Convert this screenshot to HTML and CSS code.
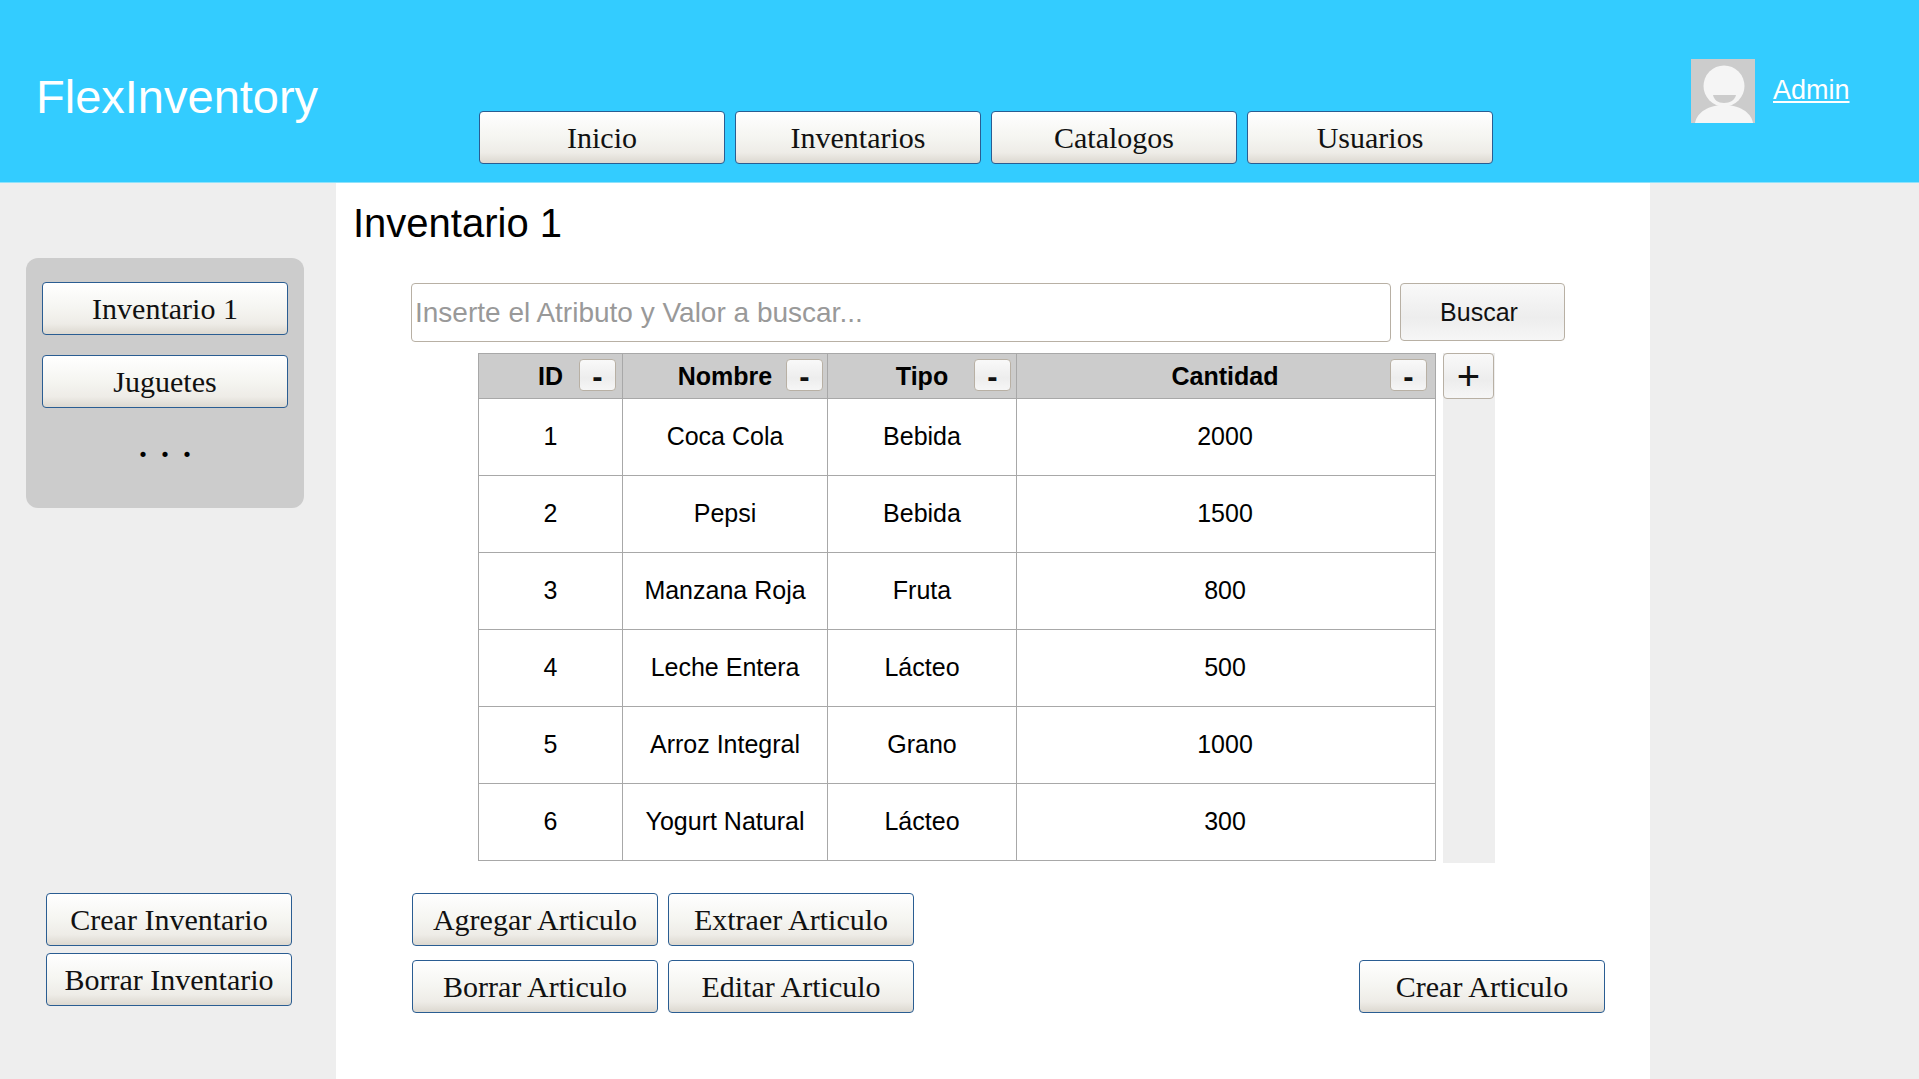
FILE: index.html
```html
<!DOCTYPE html>
<html lang="es">
<head>
  <meta charset="UTF-8">
  <title>FlexInventory</title>
  <link rel="stylesheet" href="styles.css">
</head>
<body>

  <header class="topbar">
    <div class="logo">FlexInventory</div>
    <nav class="nav">
      <button class="btn">Inicio</button>
      <button class="btn">Inventarios</button>
      <button class="btn">Catalogos</button>
      <button class="btn">Usuarios</button>
    </nav>
    <div class="user">
      <svg class="avatar" viewBox="0 0 64 64" width="64" height="64">
        <rect width="64" height="64" fill="#cccccc"/>
        <path d="M4 64C6 53 18 46 33 46S60 53 62 64Z" fill="#f5f5f5"/>
        <circle cx="33" cy="27" r="20.5" fill="#f5f5f5"/>
        <path d="M22 36H45C44 41 39 44 33 44S23 41 22 36Z" fill="#cccccc"/>
      </svg>
      <a class="user-link" href="#">Admin</a>
    </div>
  </header>

  <div class="layout">

    <aside class="sidebar">
      <div class="inv-list">
        <button class="btn">Inventario 1</button>
        <button class="btn">Juguetes</button>
        <div class="dots">. . .</div>
      </div>
      <div class="inv-actions">
        <button class="btn">Crear Inventario</button>
        <button class="btn">Borrar Inventario</button>
      </div>
    </aside>

    <main class="content">
      <h2 class="title">Inventario 1</h2>

      <div class="search">
        <input class="search-input" type="text" placeholder="Inserte el Atributo y Valor a buscar...">
        <button class="btn-light search-btn">Buscar</button>
      </div>

      <div class="table-row">
        <table class="items">
          <colgroup>
            <col class="col-id">
            <col class="col-nombre">
            <col class="col-tipo">
            <col class="col-cantidad">
          </colgroup>
          <thead>
            <tr>
              <th>ID<button class="btn-light btn-min">-</button></th>
              <th>Nombre<button class="btn-light btn-min">-</button></th>
              <th>Tipo<button class="btn-light btn-min">-</button></th>
              <th>Cantidad<button class="btn-light btn-min">-</button></th>
            </tr>
          </thead>
          <tbody>
            <tr><td>1</td><td>Coca Cola</td><td>Bebida</td><td>2000</td></tr>
            <tr><td>2</td><td>Pepsi</td><td>Bebida</td><td>1500</td></tr>
            <tr><td>3</td><td>Manzana Roja</td><td>Fruta</td><td>800</td></tr>
            <tr><td>4</td><td>Leche Entera</td><td>Lácteo</td><td>500</td></tr>
            <tr><td>5</td><td>Arroz Integral</td><td>Grano</td><td>1000</td></tr>
            <tr><td>6</td><td>Yogurt Natural</td><td>Lácteo</td><td>300</td></tr>
          </tbody>
        </table>
        <div class="add-col">
          <button class="btn-light btn-add">+</button>
        </div>
      </div>

      <div class="actions">
        <div class="actions-grid">
          <button class="btn">Agregar Articulo</button>
          <button class="btn">Extraer Articulo</button>
          <button class="btn">Borrar Articulo</button>
          <button class="btn">Editar Articulo</button>
        </div>
        <button class="btn">Crear Articulo</button>
      </div>
    </main>

    <div class="rightbar"></div>

  </div>

</body>
</html>
```

FILE: styles.css
```css
html, body {
  height: 100%;
}
body {
  margin: 0;
  overflow: hidden;
  background: #eeeeee;
  font-family: "Liberation Sans", Arial, sans-serif;
  color: #000;
}

/* botones */
.btn {
  width: 246px;
  height: 53px;
  padding: 1px 0 0;
  border: 1px solid #2a5d92;
  border-radius: 4px;
  background: linear-gradient(#ffffff 0%, #f5f5f1 50%, #eeece7 80%, #dcd8d0 100%);
  font-family: "Liberation Serif", "Times New Roman", serif;
  font-size: 30px;
  color: #111;
}
.btn-light {
  padding: 0;
  border: 1px solid #b8b0a4;
  border-radius: 4px;
  background: linear-gradient(#f9f9f9 0%, #ededed 60%, #f6f6f6 100%);
  font-family: "Liberation Sans", Arial, sans-serif;
  color: #111;
}

/* cabecera */
.topbar {
  display: flex;
  height: 182px;
  background: #33ccff;
  border-bottom: 1px solid #8fe2fb;
}
.logo {
  width: 443px;
  padding: 69px 0 0 36px;
  font-size: 47px;
  line-height: 56px;
  color: #fff;
}
.nav {
  display: flex;
  gap: 10px;
  padding-top: 111px;
}
.user {
  display: flex;
  align-items: flex-start;
  gap: 18px;
  margin-left: 198px;
  padding-top: 59px;
}
.user-link {
  margin-top: 14px;
  font-size: 27px;
  line-height: 34px;
  color: #fff;
}

/* cuerpo */
.layout {
  display: grid;
  grid-template-columns: 336px 1314px 1fr;
  height: 896px;
}

.sidebar {
  display: flex;
  flex-direction: column;
  padding: 75px 32px 0 26px;
}
.inv-list {
  display: flex;
  flex-direction: column;
  align-items: center;
  gap: 20px;
  width: 278px;
  height: 250px;
  padding-top: 24px;
  box-sizing: border-box;
  background: #cccccc;
  border-radius: 12px;
}
.dots {
  padding-left: 3px;
  font-family: "Liberation Serif", "Times New Roman", serif;
  font-size: 32px;
  font-weight: bold;
  letter-spacing: 3px;
  line-height: 36px;
}
.inv-actions {
  display: flex;
  flex-direction: column;
  gap: 7px;
  margin-top: 385px;
  margin-left: 20px;
}

/* contenido */
.content {
  background: #fff;
  padding: 0 45px 0 17px;
}
.title {
  margin: 16px 0 0;
  font-size: 40px;
  font-weight: normal;
  line-height: 48px;
}
.search {
  display: flex;
  gap: 9px;
  margin: 36px 0 0 58px;
}
.search-input {
  width: 980px;
  height: 59px;
  padding: 1px 3px 0;
  box-sizing: border-box;
  border: 1px solid #b8b0a4;
  border-radius: 4px;
  font-family: "Liberation Sans", Arial, sans-serif;
  font-size: 28px;
}
.search-input::placeholder {
  color: #999;
  opacity: 1;
}
.search-btn {
  width: 165px;
  height: 58px;
  padding-right: 7px;
  font-size: 25px;
}

.table-row {
  display: flex;
  gap: 7px;
  margin: 11px 0 0 125px;
}
.items {
  width: 958px;
  table-layout: fixed;
  border-collapse: collapse;
  align-self: flex-start;
  font-size: 25px;
}
.col-id { width: 144px; }
.col-nombre { width: 205px; }
.col-tipo { width: 189px; }
.items th,
.items td {
  padding: 0;
  border: 1px solid #a8a8a8;
  text-align: center;
  box-sizing: border-box;
}
.items th {
  position: relative;
  height: 45px;
  background: #cccccc;
  font-size: 25px;
}
.items td {
  height: 77px;
  padding-bottom: 2px;
}
.items th:last-child,
.items td:last-child {
  padding-right: 2px;
}
.btn-min {
  position: absolute;
  top: 5px;
  right: 6px;
  width: 37px;
  height: 32px;
  padding-top: 3px;
  font-size: 31px;
  font-weight: bold;
  line-height: 26px;
}
.items th:nth-child(2) .btn-min { right: 4px; }
.items th:nth-child(3) .btn-min { right: 5px; }
.items th:nth-child(4) .btn-min { right: 8px; }
.add-col {
  width: 52px;
  height: 510px;
  background: #eeeeee;
}
.btn-add {
  display: block;
  width: 51px;
  height: 46px;
  font-size: 40px;
  line-height: 40px;
}

.actions {
  display: flex;
  justify-content: space-between;
  align-items: flex-end;
  margin: 30px 0 0 59px;
}
.actions-grid {
  display: grid;
  grid-template-columns: 246px 246px;
  column-gap: 10px;
  row-gap: 14px;
}

.rightbar {
  background: #eeeeee;
}
```
